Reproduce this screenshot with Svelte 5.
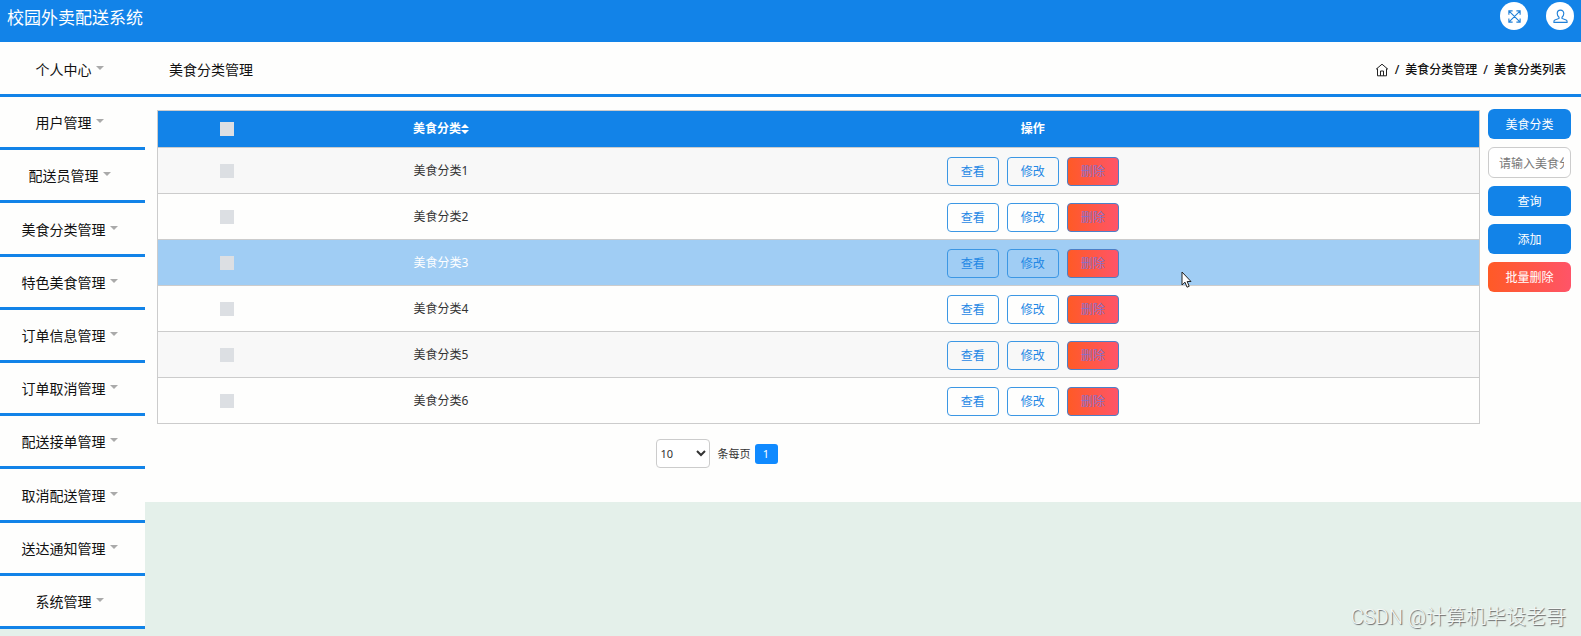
<script lang="ts">
  const menus: string[] = [
    '个人中心', '用户管理', '配送员管理', '美食分类管理', '特色美食管理', '订单信息管理',
    '订单取消管理', '配送接单管理', '取消配送管理', '送达通知管理', '系统管理',
  ];

  let rows = $state([1, 2, 3, 4, 5, 6].map((id) => ({ id, name: `美食分类${id}`, checked: false })));
  let allChecked = $derived(rows.every((r) => r.checked));
  let hovered = $state(3);
  let keyword = $state('');
  let pageSize = $state(10);

  function toggleAll() {
    const next = !allChecked;
    rows.forEach((r) => (r.checked = next));
  }
</script>

<div class="page">
  <header class="topbar">
    <h1>校园外卖配送系统</h1>
    <div class="tools">
      <button class="round" aria-label="全屏">
        <svg viewBox="0 0 16 16" width="15" height="15">
          <path d="M2 2l12 12M14 2L2 14M2 6V2h4M10 2h4v4M14 10v4h-4M6 14H2v-4" />
        </svg>
      </button>
      <button class="round" aria-label="个人中心">
        <svg viewBox="0 0 16 16" width="15" height="15">
          <path d="M8 1.200c-2.200 0-3.500 1.500-3.500 3.700 0 1.700.8 3 1.900 3.900v1.300L2 11.800c-.7.3-1 .8-1 1.500v1h14v-1c0-.7-.3-1.200-1-1.500l-4.400-1.700V8.800c1.100-.9 1.900-2.200 1.900-3.900 0-2.200-1.300-3.700-3.500-3.700z" />
        </svg>
      </button>
    </div>
  </header>

  <div class="body">
    <nav class="sidebar">
      {#each menus as menu (menu)}
        <a href="#menu">{menu}<span class="caret"></span></a>
      {/each}
    </nav>

    <main>
      <div class="page-head">
        <h2>美食分类管理</h2>
        <div class="crumbs">
          <a href="#home" aria-label="首页">
            <svg viewBox="0 0 14 14" width="14" height="14">
              <path d="M1 6.300L7 1.200l6 5.100M2.500 5.500v7.300h9V5.500M5.500 12.800V8h3v4.800" />
            </svg>
          </a>
          <span>/</span>
          <a href="#list">美食分类管理</a>
          <span>/</span>
          <span>美食分类列表</span>
        </div>
      </div>

      <div class="content">
        <div class="left">
          <table>
            <colgroup>
              <col class="col-check" />
              <col class="col-name" />
              <col />
            </colgroup>
            <thead>
              <tr>
                <th><input type="checkbox" aria-label="全选" checked={allChecked} onchange={toggleAll} /></th>
                <th>
                  <span class="sort">美食分类<svg viewBox="0 0 8 10" width="8" height="10"><path d="M4 0l4 4H0zM4 10L0 6h8z" /></svg></span>
                </th>
                <th>操作</th>
              </tr>
            </thead>
            <tbody>
              {#each rows as row (row.id)}
                <tr class:hover={hovered === row.id} onmouseenter={() => (hovered = row.id)}>
                  <td><input type="checkbox" aria-label={row.name} bind:checked={row.checked} /></td>
                  <td>{row.name}</td>
                  <td>
                    <div class="ops">
                      <button>查看</button>
                      <button>修改</button>
                      <button class="del">删除</button>
                    </div>
                  </td>
                </tr>
              {/each}
            </tbody>
          </table>

          <div class="pager">
            <select id="size" bind:value={pageSize}>
              <option value={10}>10</option>
              <option value={25}>25</option>
              <option value={50}>50</option>
            </select>
            <label for="size">条每页</label>
            <button>1</button>
          </div>
        </div>

        <div class="search">
          <label class="block" for="keyword">美食分类</label>
          <input id="keyword" type="text" placeholder="请输入美食分类" bind:value={keyword} />
          <button class="block">查询</button>
          <button class="block">添加</button>
          <button class="block danger">批量删除</button>
        </div>
      </div>
    </main>
  </div>

  <svg class="cursor" viewBox="0 0 12 18" width="12" height="18">
    <path d="M1 1v13l3-2.800 2 5 2.200-.9-2-4.800H10z" />
  </svg>
  <div class="watermark">CSDN @计算机毕设老哥</div>
</div>

<style>
  :global(body) { margin: 0; }
  .page {
    position: relative;
    display: flex;
    flex-direction: column;
    min-height: 100vh;
    background: #e4f0ea;
    color: #333;
    font-family: "Noto Sans", "Noto Sans CJK SC", sans-serif;
    font-size: 12px;
    line-height: 18px;
  }
  button, input, select { box-sizing: border-box; margin: 0; font: inherit; }
  button { padding: 0; border: 0; cursor: pointer; }
  a { color: inherit; text-decoration: none; }
  h1, h2 { margin: 0; font-weight: 400; }

  .topbar {
    display: flex;
    justify-content: space-between;
    align-items: flex-start;
    box-sizing: border-box;
    height: 42px;
    padding: 2px 7px;
    background: #1283e8;
    color: #fff;
  }
  h1 { font-size: 17px; line-height: 32px; }
  .tools { display: flex; gap: 18px; }
  .round {
    display: flex;
    align-items: center;
    justify-content: center;
    width: 28px;
    height: 28px;
    border-radius: 50%;
    background: #fff;
  }
  .round svg { fill: none; stroke: #2080d8; stroke-width: 1.2; }

  .body { display: flex; flex: 1; }
  .sidebar {
    display: flex;
    flex-direction: column;
    flex: none;
    box-sizing: border-box;
    width: 145px;
    padding-bottom: 7px;
  }
  .sidebar a {
    display: flex;
    flex: 1;
    align-items: center;
    justify-content: center;
    box-sizing: border-box;
    min-height: 52px;
    padding: 2px 6px 0 0;
    border-bottom: 3px solid #1283e8;
    background: #fefefd;
    color: #111;
    font-size: 14px;
  }
  .sidebar a:first-child { flex: none; height: 55px; padding-top: 4px; }
  .caret {
    margin: 0 0 4px 4px;
    border: 4px solid transparent;
    border-top-color: #aaa;
    border-bottom: 0;
  }

  main { flex: 1; min-width: 0; }
  .page-head {
    display: flex;
    align-items: center;
    justify-content: space-between;
    box-sizing: border-box;
    height: 55px;
    padding: 4px 15px 0 24px;
    border-bottom: 3px solid #1283e8;
    background: #fefefd;
    color: #111;
  }
  h2 { font-size: 14px; }
  .crumbs { display: flex; align-items: center; gap: 6px; font-weight: 500; }
  .crumbs a { display: flex; }
  .crumbs svg { fill: none; stroke: #222; }

  .content {
    display: flex;
    gap: 8px;
    padding: 12px 10px 34px 12px;
    background: #fefefd;
  }
  .left { flex: 1; min-width: 0; padding-top: 1px; }
  table {
    width: 100%;
    table-layout: fixed;
    border-collapse: collapse;
    border: 1px solid #ccc;
    text-align: center;
  }
  .col-check { width: 138px; }
  .col-name { width: 291px; }
  th, td { padding: 0; border-bottom: 1px solid #ccc; }
  th { height: 36px; background: #1283e8; color: #fff; font-weight: 700; }
  td { height: 45px; }
  tbody tr:nth-child(odd) { background: #f8f8f8; }
  tbody tr.hover { background: #a0cdf4; color: #fff; }
  input[type="checkbox"] {
    display: block;
    width: 14px;
    height: 14px;
    margin: 0 auto;
    appearance: none;
    background: #dcdfe3;
  }
  input[type="checkbox"]:checked { background: #1283e8; }
  .sort { display: inline-flex; align-items: center; }
  .sort svg { fill: #fff; }

  .ops { display: flex; justify-content: center; gap: 8px; padding-top: 1px; }
  .ops button {
    width: 52px;
    height: 29px;
    padding-top: 2px;
    border: 1px solid #3c97e4;
    border-radius: 4px;
    background: transparent;
    color: #1f88e5;
  }
  .ops .del {
    border-color: #4c80c8;
    background: linear-gradient(to right, #ff5a26, #ff5468);
    color: #8670cc;
  }

  .pager {
    display: flex;
    align-items: center;
    justify-content: center;
    padding: 15px 204px 0 0;
    font-size: 11px;
  }
  .pager select {
    width: 54px;
    height: 29px;
    border: 1px solid #ccc;
    border-radius: 4px;
    background: #fff;
    color: #333;
  }
  .pager label { margin: 0 4px 0 8px; }
  .pager button {
    width: 23px;
    height: 20px;
    border-radius: 3px;
    background: #108aff;
    color: #fff;
  }

  .search { display: flex; flex-direction: column; flex: none; gap: 8px; width: 83px; }
  .block, .search input {
    box-sizing: border-box;
    width: 100%;
    height: 30px;
    border-radius: 6px;
    line-height: 30px;
    text-align: center;
  }
  .block { padding-top: 1px; background: #1283e8; color: #fff; }
  .danger { background: linear-gradient(to right, #ff5a26, #ff5468); }
  .search input {
    height: 31px;
    padding: 1px 6px 0 10px;
    border: 1px solid #ccc;
    background: #fff;
    text-align: left;
  }
  .search input::placeholder { color: #777; }

  .cursor { position: absolute; left: 1181px; top: 271px; pointer-events: none; }
  .cursor path { fill: #fff; stroke: #222; }
  .watermark {
    position: absolute;
    right: 15px;
    bottom: 4px;
    color: #f4f8f6;
    font-family: Roboto, "Noto Sans CJK SC", sans-serif;
    font-size: 20px;
    font-weight: 300;
    line-height: 30px;
    text-shadow: 1px 1px 1px #666;
  }
</style>
